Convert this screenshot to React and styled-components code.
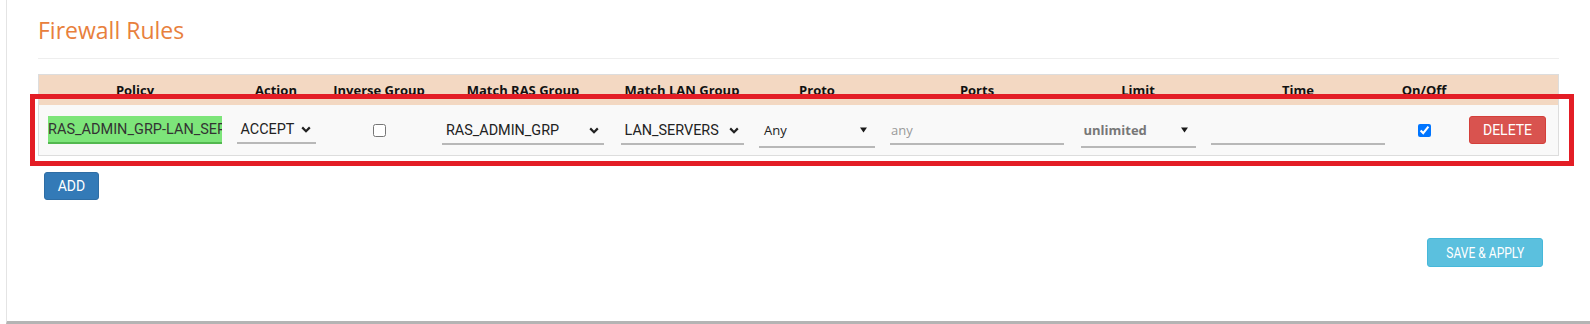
import React from 'react';
import styled, { createGlobalStyle } from 'styled-components';

const GlobalStyle = createGlobalStyle`
  html, body { margin: 0; padding: 0; background: #fff; }
  body { font-family: Roboto, "Liberation Sans", Arial, sans-serif; }
  * { box-sizing: border-box; }
`;

const Page = styled.div`
  padding-left: 6px;
  height: 324px;
`;

const Panel = styled.section`
  position: relative;
  height: 324px;
  border-left: 1px solid #e4e4e4;
  border-bottom: 3px solid #b4b4b4;
  padding: 14px 31px 0 31px;
  display: flex;
  flex-direction: column;
`;

const Title = styled.h2`
  margin: 0;
  font-family: "Open Sans", "Noto Sans", sans-serif;
  font-weight: 400;
  font-size: 23px;
  line-height: 32px;
  color: #e8803c;
`;

const Divider = styled.div`
  margin-top: 12px;
  height: 1px;
  background: #eeeeee;
`;

const COLS = '192px 90px 116px 172px 146px 124px 196px 126px 194px 58px 105px';

const Table = styled.div`
  margin-top: 15px;
  border: 1px solid #dddddd;
`;

const HeaderRow = styled.div`
  display: grid;
  grid-template-columns: ${COLS};
  height: 30px;
  align-items: center;
  background: #f3d8c2;
`;

const HeaderCell = styled.div`
  text-align: center;
  font-family: "Open Sans", "Noto Sans", sans-serif;
  font-weight: 700;
  font-size: 13px;
  color: #111;
  white-space: nowrap;
`;

const BodyRow = styled.div`
  display: grid;
  grid-template-columns: ${COLS};
  height: 50px;
  align-items: center;
  justify-items: center;
  background: #f9f9f9;
`;

const PolicyInput = styled.input`
  width: 174px;
  height: 28px;
  border: none;
  border-bottom: 2px solid #52b84f;
  background: #7de57a;
  padding: 0;
  font-family: Roboto, "Liberation Sans", sans-serif;
  font-size: 14.5px;
  color: #333;
  outline: none;
`;

const TextInput = styled.input`
  width: 174px;
  height: 28px;
  margin-top: 2px;
  border: none;
  border-bottom: 2px solid #b8b8b8;
  background: transparent;
  padding: 0 0 0 1px;
  font-family: "Open Sans", "Noto Sans", sans-serif;
  font-size: 13px;
  color: #333;
  outline: none;
  &::placeholder { color: #9a9a9a; }
`;

const Select = styled.div`
  width: ${p => p.$w}px;
  height: ${p => p.$h || 28}px;
  margin-top: ${p => p.$mt || 0}px;
  display: flex;
  align-items: center;
  justify-content: space-between;
  padding: 0 ${p => p.$pr || 5}px 0 ${p => p.$pl || 4}px;
  border-bottom: 2px solid #b8b8b8;
  font-family: ${p => (p.$alt ? '"Open Sans", "Noto Sans", sans-serif' : 'Roboto, "Liberation Sans", sans-serif')};
  font-size: ${p => (p.$alt ? 13 : 14.4)}px;
  font-weight: ${p => (p.$bold ? 700 : 400)};
  color: ${p => (p.$bold ? '#777' : '#222')};
  white-space: nowrap;
`;

const Check = styled.input`
  width: 13px;
  height: 13px;
  margin: 0;
`;

const Button = styled.button`
  height: ${p => p.$h || 28}px;
  padding: 0;
  border: 1px solid ${p => p.$border};
  border-radius: 3px;
  background: ${p => p.$bg};
  color: #fff;
  font-family: Roboto, "Liberation Sans", sans-serif;
  font-size: 14px;
  line-height: 1;
  cursor: pointer;
`;

const Narrow = styled.span`
  display: inline-block;
  transform: scaleX(0.86);
  white-space: nowrap;
`;

const AddButton = styled(Button)`
  align-self: flex-start;
  margin-top: 16px;
  margin-left: 6px;
  width: 55px;
`;

const SaveButton = styled(Button)`
  align-self: flex-end;
  margin-top: 38px;
  margin-right: 16px;
  width: 116px;
`;

const DeleteButton = styled(Button)`
  justify-self: end;
  margin-right: 12px;
  width: 77px;
`;

const Highlight = styled.div`
  position: absolute;
  left: 23px;
  top: 94px;
  width: 1544px;
  height: 72px;
  border: 5px solid #e31d25;
  pointer-events: none;
`;

const Chevron = () => (
  <svg width="10" height="7" viewBox="0 0 10 7">
    <path d="M1.2 1.4 L5 5.2 L8.8 1.4" fill="none" stroke="#222" strokeWidth="2.2" />
  </svg>
);

const Caret = () => (
  <svg width="7" height="6" viewBox="0 0 7 6">
    <polygon points="0,0.5 7,0.5 3.5,5.5" fill="#1a1a1a" />
  </svg>
);

const headers = ['Policy', 'Action', 'Inverse Group', 'Match RAS Group', 'Match LAN Group', 'Proto', 'Ports', 'Limit', 'Time', 'On/Off', ''];

export default function App() {
  return (
    <>
      <GlobalStyle />
      <Page>
        <Panel>
          <Title>Firewall Rules</Title>
          <Divider />
          <Table>
            <HeaderRow>
              {headers.map((h, i) => (
                <HeaderCell key={i}>{h}</HeaderCell>
              ))}
            </HeaderRow>
            <BodyRow>
              <PolicyInput readOnly value="RAS_ADMIN_GRP-LAN_SERVERS" />
              <Select $w={79}>
                <span>ACCEPT</span>
                <Chevron />
              </Select>
              <Check type="checkbox" />
              <Select $w={162} $mt={2}>
                <span>RAS_ADMIN_GRP</span>
                <Chevron />
              </Select>
              <Select $w={123} $mt={2}>
                <span>LAN_SERVERS</span>
                <Chevron />
              </Select>
              <Select $w={116} $h={34} $mt={2} $alt $pl={5} $pr={8}>
                <span>Any</span>
                <Caret />
              </Select>
              <TextInput placeholder="any" />
              <Select $w={115} $h={34} $mt={2} $alt $bold $pl={3} $pr={8}>
                <span>unlimited</span>
                <Caret />
              </Select>
              <TextInput />
              <Check type="checkbox" defaultChecked />
              <DeleteButton $bg="#d9534f" $border="#d43f3a">DELETE</DeleteButton>
            </BodyRow>
          </Table>
          <AddButton $bg="#337ab7" $border="#2e6da4">ADD</AddButton>
          <SaveButton $bg="#5bc0de" $border="#46b8da" $h={29}>
            <Narrow>SAVE &amp; APPLY</Narrow>
          </SaveButton>
          <Highlight />
        </Panel>
      </Page>
    </>
  );
}
